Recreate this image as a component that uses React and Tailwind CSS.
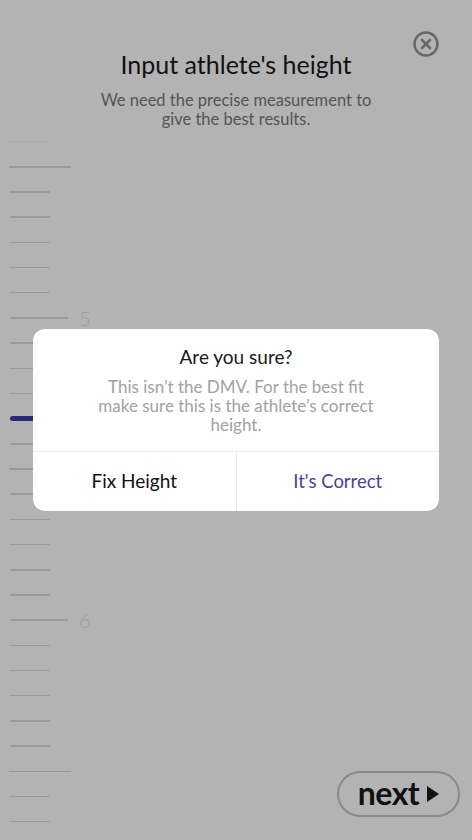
import React from "react";

const ticks = Array.from({ length: 28 }, (_, i) => i);

function Tick({ i }) {
  if (i === 11) {
    return (
      <div className="h-[25.2px] flex items-center">
        <div className="ml-[10px] h-[5px] w-[40px] rounded-full bg-[#2c2878]" />
      </div>
    );
  }
  const foot = i === 7 || i === 19;
  const half = i === 1 || i === 13 || i === 25;
  const label = i === 7 ? "5" : i === 19 ? "6" : null;
  return (
    <div className={`h-[25.2px] flex items-center ${i === 0 ? "opacity-40" : ""}`}>
      <div
        className={`h-[1.5px] bg-[#9a9a9a] ${
          foot ? "ml-[10px] w-[58px]" : half ? "ml-[9px] w-[62px]" : "ml-[10px] w-[40px]"
        }`}
      />
      {label && (
        <span className="ml-[11px] text-[20px] leading-none text-[#9c9c9c] font-light">{label}</span>
      )}
    </div>
  );
}

export default function App() {
  return (
    <div
      className="relative h-[840px] w-full overflow-hidden bg-[#b3b3b3]"
      style={{ fontFamily: "Lato, 'Noto Sans', sans-serif" }}
    >
      {/* close */}
      <button className="absolute left-[413px] top-[31px] h-[26px] w-[26px]">
        <svg viewBox="0 0 26 26" className="h-[26px] w-[26px]">
          <circle cx="13" cy="13" r="11.5" fill="none" stroke="#686868" strokeWidth="2.5" />
          <path d="M9 9 L17 17 M17 9 L9 17" stroke="#686868" strokeWidth="2.6" strokeLinecap="round" />
        </svg>
      </button>

      {/* header */}
      <div className="flex flex-col items-center pt-[47px]">
        <h1 className="text-[25px] leading-[34px] text-[#111]">Input athlete's height</h1>
        <p className="mt-[10px] w-[285px] text-center text-[16.5px] leading-[19px] text-[#555]">
          We need the precise measurement to give the best results.
        </p>
      </div>

      {/* ruler */}
      <div className="absolute left-0 top-[129px] flex flex-col">
        {ticks.map((i) => (
          <Tick key={i} i={i} />
        ))}
      </div>

      {/* dialog */}
      <div className="absolute left-[33px] top-[329px] flex h-[182px] w-[406px] flex-col rounded-[12px] bg-white">
        <div className="flex flex-col items-center pt-[16px]">
          <div className="text-[19px] leading-[23px] text-[#1a1a1a]">Are you sure?</div>
          <p className="mt-[9px] w-[296px] text-center text-[17px] leading-[19px] text-[#a2a2a2]">
            This isn’t the DMV. For the best fit make sure this is the athlete’s correct height.
          </p>
        </div>
        <div className="mt-auto flex h-[60px] border-t border-[#ebebeb]">
          <div className="flex flex-1 items-center justify-center border-r border-[#ebebeb] text-[19px] text-[#111]">
            Fix Height
          </div>
          <div className="flex flex-1 items-center justify-center text-[18.5px] text-[#4a4296]">
            It's Correct
          </div>
        </div>
      </div>

      {/* next */}
      <button className="absolute left-[337px] top-[771px] flex h-[46px] w-[123px] items-center justify-center gap-[8px] rounded-full border-2 border-[#8a8a8a]">
        <span className="text-[32px] font-bold leading-none text-[#111] -mt-[2px]" style={{ letterSpacing: "-0.5px" }}>
          next
        </span>
        <svg viewBox="0 0 12 16" className="h-[16px] w-[12px]">
          <path d="M0 0 L12 8 L0 16 Z" fill="#111" />
        </svg>
      </button>
    </div>
  );
}
